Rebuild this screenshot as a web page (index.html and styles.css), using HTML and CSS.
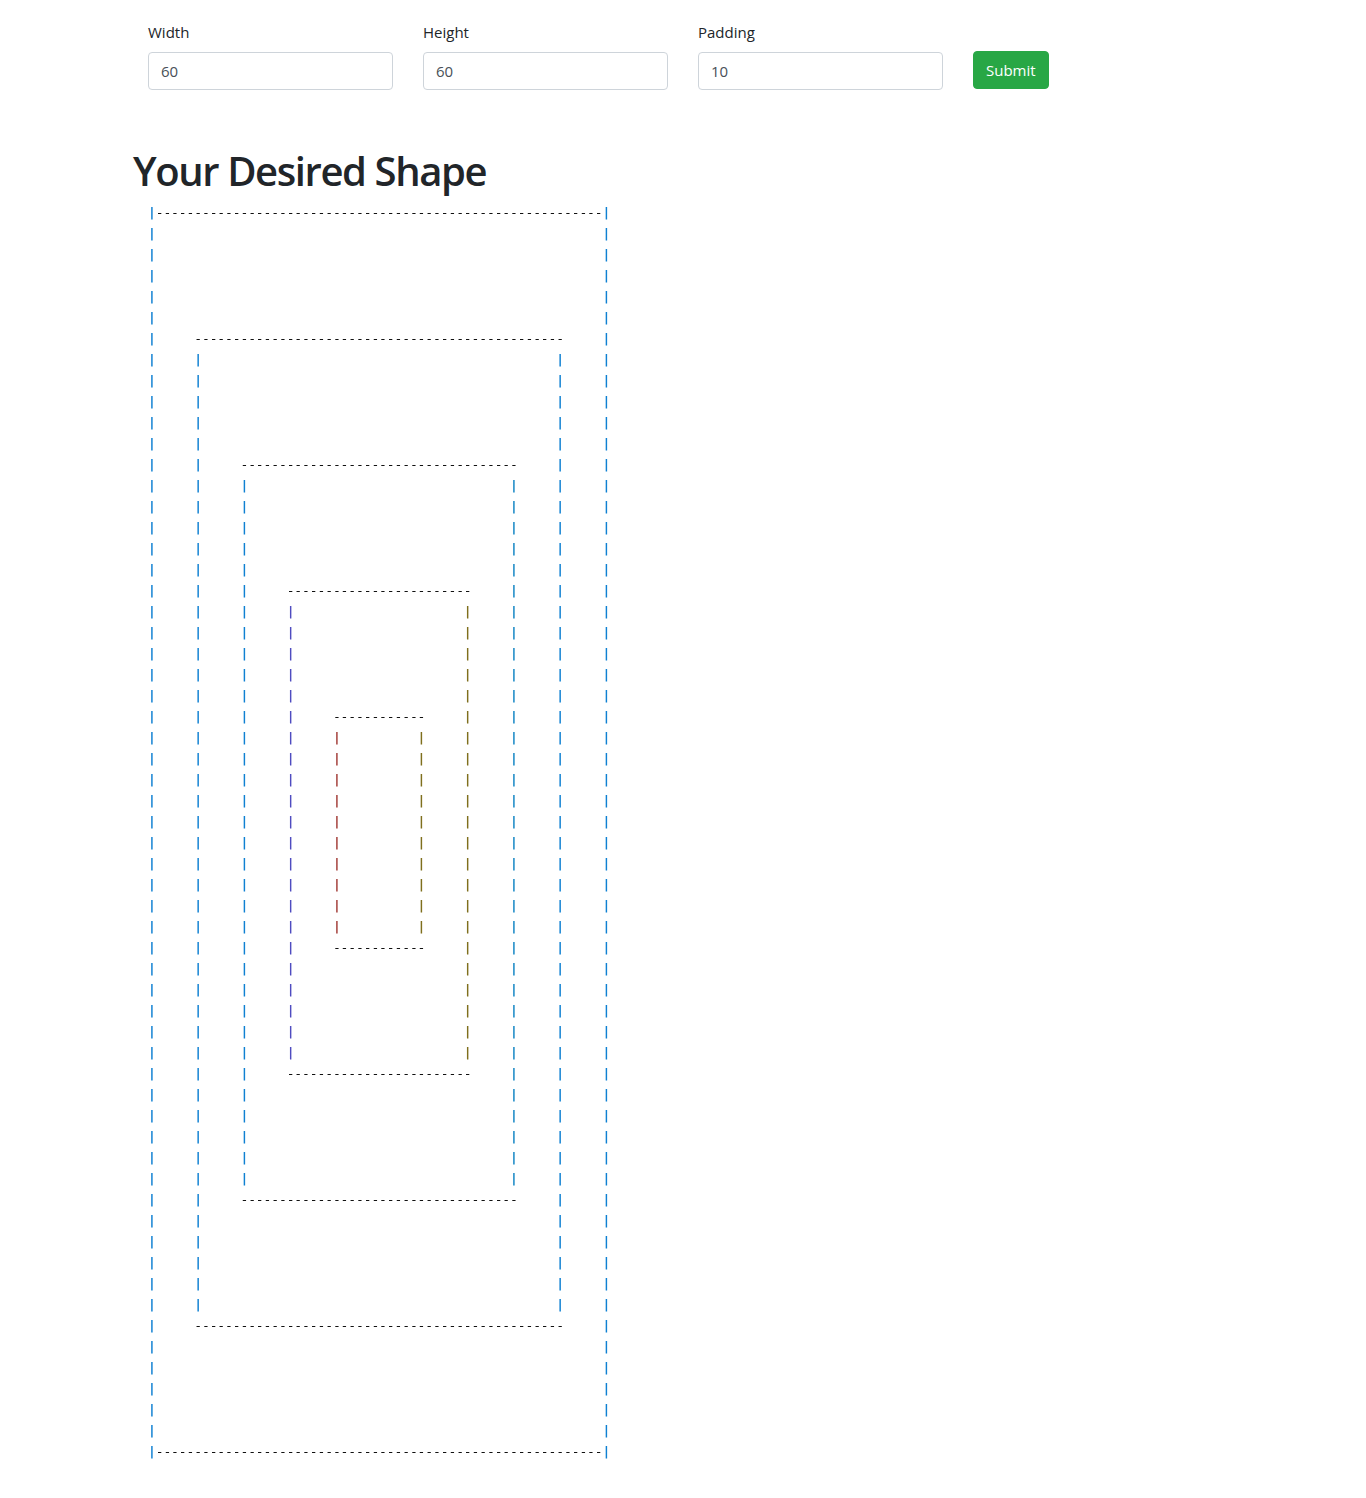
FILE: index.html
```html
<!DOCTYPE html>
<html lang="en">
<head>
<meta charset="utf-8">
<title>Your Desired Shape</title>
<link rel="stylesheet" href="styles.css">
</head>
<body>
<div class="container">
  <form class="shape-form">
    <div class="field">
      <label class="field-label" for="width">Width</label>
      <input class="field-input" id="width" type="text" value="60">
    </div>
    <div class="field">
      <label class="field-label" for="height">Height</label>
      <input class="field-input" id="height" type="text" value="60">
    </div>
    <div class="field">
      <label class="field-label" for="padding">Padding</label>
      <input class="field-input" id="padding" type="text" value="10">
    </div>
    <div class="field field-action">
      <button class="btn-submit" type="button">Submit</button>
    </div>
  </form>
  <h1 class="title">Your Desired Shape</h1>
  <div class="shape" id="shape"></div>
</div>
<script src="script.js"></script>
</body>
</html>
```

FILE: styles.css
```css
body {
  margin: 0;
  background: #fff;
  color: #212529;
  font-family: "Open Sans", "Noto Sans", sans-serif;
}

.container {
  width: 1140px;
  margin: 0 auto;
  padding: 20px 20px 0;
  box-sizing: border-box;
}

.shape-form {
  display: flex;
}

.field {
  width: 275px;
  padding: 0 15px;
  box-sizing: border-box;
}

.field-label {
  display: block;
  font-size: 15px;
  line-height: 24px;
  margin-bottom: 8px;
}

.field-input {
  display: block;
  width: 100%;
  height: 38px;
  box-sizing: border-box;
  padding: 6px 12px;
  border: 1px solid #ced4da;
  border-radius: 4px;
  font-family: inherit;
  font-size: 15px;
  color: #495057;
  background: #fff;
}

.btn-submit {
  margin-top: 31px;
  height: 38px;
  padding: 0 12px;
  background: #28a745;
  border: 1px solid #28a745;
  border-radius: 4px;
  color: #fff;
  font-family: inherit;
  font-size: 15px;
  line-height: 24px;
}

.title {
  margin: 57px 0 7px;
  font-size: 40px;
  font-weight: 600;
  line-height: 48px;
  letter-spacing: -1.4px;
}

.shape {
  margin-left: 15px;
  width: 463px;
  font-family: "DejaVu Sans Mono", monospace;
  font-size: 13px;
  color: #111;
  will-change: transform;
}

.shape-row {
  display: grid;
  grid-template-columns: repeat(60, 7.715px);
  height: 21px;
  line-height: 21px;
}

.cell {
  text-align: center;
  white-space: pre;
}

.c-blue,
.c-teal,
.c-slate,
.c-olive,
.c-red {
  font-weight: 700;
}

.c-blue { color: #0f80d2; }
.c-teal { color: #1185c4; }
.c-slate { color: #4f4cc0; }
.c-olive { color: #7f6f1d; }
.c-red { color: #a23b36; }
```

FILE: script.js
```js
(function () {
  var N = 60, STEP = 6, K = 5;
  var colors = [
    ['c-blue', 'c-blue'],
    ['c-blue', 'c-blue'],
    ['c-blue', 'c-teal'],
    ['c-slate', 'c-olive'],
    ['c-red', 'c-olive']
  ];
  var html = '';
  for (var r = 0; r < N; r++) {
    html += '<div class="shape-row">';
    for (var c = 0; c < N; c++) {
      var ch = ' ', cls = '';
      for (var k = 0; k < K; k++) {
        var o = k * STEP, e = N - 1 - o;
        if (k === 0) {
          if (c === o || c === e) {
            ch = '|'; cls = colors[k][c === o ? 0 : 1];
          } else if (r === o || r === e) {
            ch = '-';
          }
        } else {
          if ((r === o || r === e) && c >= o && c <= e) {
            ch = '-';
          } else if ((c === o || c === e) && r > o && r < e) {
            ch = '|'; cls = colors[k][c === o ? 0 : 1];
          }
        }
      }
      html += '<span class="cell' + (cls ? ' ' + cls : '') + '">' + ch + '</span>';
    }
    html += '</div>';
  }
  document.getElementById('shape').innerHTML = html;
})();
```
